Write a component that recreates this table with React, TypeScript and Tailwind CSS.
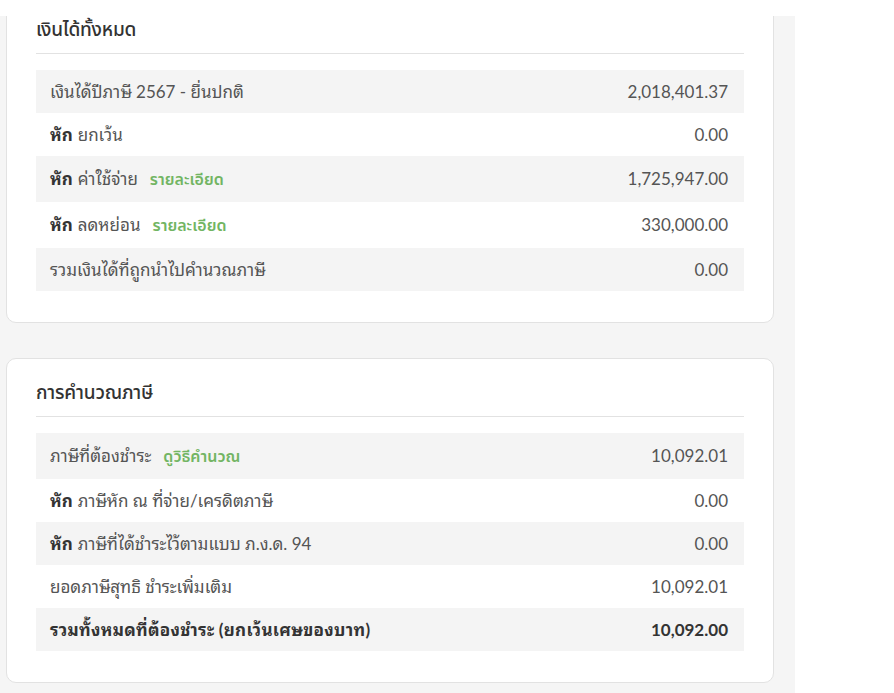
type Row = {
  bold?: string;
  label: string;
  link?: string;
  value: string;
  strong?: boolean;
};

const incomeRows: Row[] = [
  { label: "เงินได้ปีภาษี 2567 - ยื่นปกติ", value: "2,018,401.37" },
  { bold: "หัก", label: "ยกเว้น", value: "0.00" },
  { bold: "หัก", label: "ค่าใช้จ่าย", link: "รายละเอียด", value: "1,725,947.00" },
  { bold: "หัก", label: "ลดหย่อน", link: "รายละเอียด", value: "330,000.00" },
  { label: "รวมเงินได้ที่ถูกนำไปคำนวณภาษี", value: "0.00" },
];

const taxRows: Row[] = [
  { label: "ภาษีที่ต้องชำระ", link: "ดูวิธีคำนวณ", value: "10,092.01" },
  { bold: "หัก", label: "ภาษีหัก ณ ที่จ่าย/เครดิตภาษี", value: "0.00" },
  { bold: "หัก", label: "ภาษีที่ได้ชำระไว้ตามแบบ ภ.ง.ด. 94", value: "0.00" },
  { label: "ยอดภาษีสุทธิ ชำระเพิ่มเติม", value: "10,092.01" },
  { label: "รวมทั้งหมดที่ต้องชำระ (ยกเว้นเศษของบาท)", value: "10,092.00", strong: true },
];

function Card({ title, rows, className = "" }: { title: string; rows: Row[]; className?: string }) {
  return (
    <section className={`w-[768px] rounded-[10px] border border-[#e2e2e2] bg-white px-[29px] pt-[19px] pb-[31px] ${className}`}>
      <h2 className="border-b border-[#e2e2e2] pb-[10px] font-['Lato','Noto_Sans_Thai',sans-serif] text-[19px] leading-[28px] font-medium tracking-[-0.2px] text-[#333]">
        {title}
      </h2>
      <div className="mt-[16px]">
        {rows.map((r, i) => (
          <div
            key={i}
            className={`flex items-center justify-between pr-[16px] pl-[14px] ${r.link ? "h-[46px]" : "h-[43px]"} ${
              i % 2 === 0 ? "bg-[#f4f4f4]" : "bg-white"
            }`}
          >
            <span className={`text-[17px] ${r.strong ? "font-bold tracking-[0.3px] text-[#333]" : "text-[#555]"}`}>
              {r.bold && <b className="mr-[5px] font-bold text-[#333]">{r.bold}</b>}
              {r.label}
              {r.link && (
                <a href="#" className="ml-[12px] font-['Lato','Noto_Sans_Thai',sans-serif] text-[16px] font-semibold text-[#72b563]">
                  {r.link}
                </a>
              )}
            </span>
            <span className={`text-[17px] ${r.strong ? "font-bold text-[#333]" : "text-[#555]"}`}>{r.value}</span>
          </div>
        ))}
      </div>
    </section>
  );
}

export default function App() {
  return (
    <div className="h-[693px] w-[894px] overflow-hidden bg-white font-['Lato','Noto_Sans_Thai_Looped','Noto_Serif_Thai','Noto_Sans_Thai',sans-serif]">
      <div className="h-[16px] bg-white" />
      <div className="h-[677px] w-[795px] overflow-hidden bg-[#f5f5f5] pl-[6px]">
        <Card title="เงินได้ทั้งหมด" rows={incomeRows} className="-mt-[21px]" />
        <Card title="การคำนวณภาษี" rows={taxRows} className="mt-[35px]" />
      </div>
    </div>
  );
}
